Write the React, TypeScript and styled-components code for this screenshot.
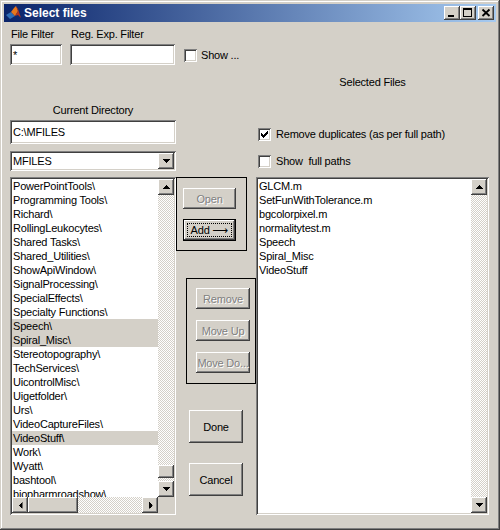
import React from "react";
import styled, { createGlobalStyle, css } from "styled-components";

const GlobalStyle = createGlobalStyle`
  html, body {
    margin: 0;
    padding: 0;
    background: #d4d0c8;
  }
  body {
    font-family: "Liberation Sans", Arial, sans-serif;
    font-size: 11px;
    letter-spacing: -0.2px;
    color: #000;
  }
`

const raised = css`
  box-shadow: inset -1px -1px #404040, inset 1px 1px #fff, inset -2px -2px #808080, inset 2px 2px #d4d0c8;
`

const sunken = css`
  box-shadow: inset 1px 1px #808080, inset -1px -1px #fff, inset 2px 2px #404040, inset -2px -2px #d4d0c8;
`

const checker = css`
  background-color: #fff;
  background-image: conic-gradient(#d4d0c8 0 25%, #fff 0 50%, #d4d0c8 0 75%, #fff 0);
  background-size: 2px 2px;
`

const Window = styled.div`
  box-sizing: border-box;
  width: 500px;
  height: 530px;
  padding: 4px;
  background: #d4d0c8;
  box-shadow: inset -1px -1px #404040, inset 1px 1px #d4d0c8, inset -2px -2px #808080, inset 2px 2px #fff;
  display: flex;
  flex-direction: column;
  overflow: hidden;
`

const TitleBar = styled.div`
  height: 18px;
  display: flex;
  align-items: center;
  padding: 0 2px;
  background: linear-gradient(to right, #0a246a, #a6caf0);
  color: #fff;
  font-size: 12px;
  font-weight: bold;
  letter-spacing: 0;
`

const TitleText = styled.span`
  flex: 1;
  margin-left: 2px;
`

const WinButton = styled.div<{ $gap?: number }>`
  width: 16px;
  height: 14px;
  margin-left: ${p => p.$gap ?? 0}px;
  background: #d4d0c8;
  ${raised}
  display: flex;
  align-items: center;
  justify-content: center;
`

const Body = styled.div`
  flex: 1;
  display: flex;
  flex-direction: column;
  padding: 6px 0 0 6px;
`

const Header = styled.div`
  display: flex;
  height: 149px;
`

const LeftHeader = styled.div`
  width: 246px;
  display: flex;
  flex-direction: column;
`

const FilterRow = styled.div`
  display: flex;
  align-items: flex-end;
`

const Field = styled.div<{ $gap?: number }>`
  display: flex;
  flex-direction: column;
  margin-left: ${p => p.$gap ?? 0}px;
`

const FieldLabel = styled.div`
  height: 13px;
  line-height: 13px;
  margin-bottom: 3px;
  padding-left: 1px;
  white-space: nowrap;
`

const TextBox = styled.div<{ $w: number; $h: number; $mt?: number }>`
  box-sizing: border-box;
  width: ${p => p.$w}px;
  height: ${p => p.$h}px;
  margin-top: ${p => p.$mt ?? 0}px;
  padding: 0 3px;
  background: #fff;
  ${sunken}
  display: flex;
  align-items: center;
  white-space: nowrap;
`

const CheckItem = styled.div<{ $gap?: number; $mt?: number; $mb?: number }>`
  display: flex;
  align-items: center;
  gap: 4px;
  margin-left: ${p => p.$gap ?? 0}px;
  margin-top: ${p => p.$mt ?? 0}px;
  margin-bottom: ${p => p.$mb ?? 0}px;
  line-height: 13px;
  white-space: nowrap;
`

const CheckSquare = styled.div`
  box-sizing: border-box;
  width: 13px;
  height: 13px;
  background: #fff;
  ${sunken}
  display: flex;
  align-items: center;
  justify-content: center;
  flex-shrink: 0;
`

const CenterLabel = styled.div<{ $w: number; $mt: number }>`
  width: ${p => p.$w}px;
  margin-top: ${p => p.$mt}px;
  height: 13px;
  line-height: 13px;
  text-align: center;
`

const Dropdown = styled.div`
  box-sizing: border-box;
  width: 166px;
  height: 20px;
  margin-top: 7px;
  padding: 2px;
  background: #fff;
  ${sunken}
  display: flex;
  align-items: stretch;
`

const DropText = styled.div`
  flex: 1;
  padding-left: 1px;
  line-height: 16px;
`

const RightHeader = styled.div`
  width: 233px;
  display: flex;
  flex-direction: column;
`

const CheckRow = styled(CheckItem)`
  padding-left: 2px;
  gap: 5px;
`

const Main = styled.div`
  display: flex;
  align-items: flex-start;
`

const ListFrame = styled.div<{ $w: number; $hscroll: boolean }>`
  box-sizing: border-box;
  width: ${p => p.$w}px;
  height: 338px;
  padding: 2px;
  background: #fff;
  ${sunken}
  display: grid;
  grid-template-columns: 1fr 16px;
  grid-template-rows: ${p => (p.$hscroll ? "1fr 16px" : "1fr")};
  flex-shrink: 0;
`

const Items = styled.div`
  overflow: hidden;
  min-width: 0;
  min-height: 0;
`

const Row = styled.div<{ $selected?: boolean }>`
  box-sizing: border-box;
  height: 14px;
  padding: 1px 0 0 1px;
  line-height: 13px;
  white-space: nowrap;
  background: ${p => (p.$selected ? "#d4d0c8" : "transparent")};
`

const VScroll = styled.div`
  display: flex;
  flex-direction: column;
`

const HScroll = styled.div`
  display: flex;
`

const Track = styled.div<{ $vertical?: boolean }>`
  flex: 1;
  ${checker}
  display: flex;
  flex-direction: ${p => (p.$vertical ? "column" : "row")};
  justify-content: flex-end;
`

const Thumb = styled.div<{ $w: number; $h: number; $mb?: number }>`
  width: ${p => p.$w}px;
  height: ${p => p.$h}px;
  margin-bottom: ${p => p.$mb ?? 0}px;
  background: #d4d0c8;
  ${raised}
  flex-shrink: 0;
`

const ArrowBox = styled.div`
  width: 16px;
  height: 16px;
  flex-shrink: 0;
  background: #d4d0c8;
  ${raised}
  display: flex;
  align-items: center;
  justify-content: center;
`

const Corner = styled.div`
  background: #d4d0c8;
`

const MiddleCol = styled.div`
  width: 80px;
  flex-shrink: 0;
  display: flex;
  flex-direction: column;
`

const Frame = styled.div<{ $w: number; $h: number; $ml?: number; $mt?: number; $pad: string; $gap: number }>`
  box-sizing: border-box;
  width: ${p => p.$w}px;
  height: ${p => p.$h}px;
  margin-left: ${p => p.$ml ?? 0}px;
  margin-top: ${p => p.$mt ?? 0}px;
  padding: ${p => p.$pad};
  border: 1px solid #000;
  display: flex;
  flex-direction: column;
  gap: ${p => p.$gap}px;
`

const Button = styled.div<{ $w: number; $h: number; $disabled?: boolean; $ml?: number; $mt?: number }>`
  box-sizing: border-box;
  width: ${p => p.$w}px;
  height: ${p => p.$h}px;
  margin-left: ${p => p.$ml ?? 0}px;
  margin-top: ${p => p.$mt ?? 0}px;
  background: #d4d0c8;
  ${raised}
  display: flex;
  align-items: center;
  justify-content: center;
  white-space: nowrap;
  overflow: hidden;
  color: ${p => (p.$disabled ? "#808080" : "#000")};
  text-shadow: ${p => (p.$disabled ? "1px 1px #fff" : "none")};
`

const DefaultButton = styled.div`
  box-sizing: border-box;
  width: 53px;
  height: 22px;
  border: 1px solid #000;
  background: #d4d0c8;
  ${raised}
  display: flex;
  align-items: center;
  justify-content: center;
  position: relative;
  &::after {
    content: "";
    position: absolute;
    inset: 3px;
    border: 1px dotted #000;
  }
`

const ArrowGlyph = styled.span`
  font-family: "DejaVu Sans", sans-serif;
  font-size: 11px;
  letter-spacing: 0;
  margin-left: 3px;
`

type Dir = "up" | "down" | "left" | "right"

const rotation: Record<Dir, number> = { up: 0, down: 180, left: -90, right: 90 }

const ScrollArrow = ({ dir }: { dir: Dir }) => (
  <ArrowBox>
    <svg width="7" height="4" viewBox="0 0 7 4" style={{ transform: `rotate(${rotation[dir]}deg)` }} shapeRendering="crispEdges">
      <path d="M3 0h1v1h1v1h1v1h1v1H0V3h1V2h1V1h1z" fill="#000" />
    </svg>
  </ArrowBox>
)

const Checkbox = ({ checked }: { checked?: boolean }) => (
  <CheckSquare>
    {checked && (
      <svg width="7" height="7" viewBox="0 0 7 7" shapeRendering="crispEdges">
        <path d="M6 0h1v3h-1v1h-1v1h-1v1h-1v1h-1v-1h-1v-1h-1v-3h1v1h1v1h1v-1h1v-1h1z" fill="#000" />
      </svg>
    )}
  </CheckSquare>
)

const MatlabIcon = () => (
  <svg width="16" height="16" viewBox="0 0 16 16">
    <polygon points="0,10 5,7 9,11 4,14" fill="#2f6db5" />
    <polygon points="5,7 8,3 10,1 12,6 9,11" fill="#e8771c" />
    <polygon points="10,1 12,4 15,13 16,14 12,10 9,11 12,6" fill="#b5321c" />
  </svg>
)

interface ListProps {
  width: number;
  items: string[];
  selected: string[];
  hscroll?: boolean;
}

const ListBox = ({ width, items, selected, hscroll = false }: ListProps) => (
  <ListFrame $w={width} $hscroll={hscroll}>
    <Items>
      {items.map(item => (
        <Row key={item} $selected={selected.includes(item)}>{item}</Row>
      ))}
    </Items>
    <VScroll>
      <ScrollArrow dir="up" />
      <Track $vertical>{hscroll && <Thumb $w={16} $h={13} $mb={3} />}</Track>
      <ScrollArrow dir="down" />
    </VScroll>
    {hscroll && (
      <>
        <HScroll>
          <ScrollArrow dir="left" />
          <Thumb $w={50} $h={16} />
          <Track />
          <ScrollArrow dir="right" />
        </HScroll>
        <Corner />
      </>
    )}
  </ListFrame>
)

const folders = [
  "PowerPointTools\\",
  "Programming Tools\\",
  "Richard\\",
  "RollingLeukocytes\\",
  "Shared Tasks\\",
  "Shared_Utilities\\",
  "ShowApiWindow\\",
  "SignalProcessing\\",
  "SpecialEffects\\",
  "Specialty Functions\\",
  "Speech\\",
  "Spiral_Misc\\",
  "Stereotopography\\",
  "TechServices\\",
  "UicontrolMisc\\",
  "Uigetfolder\\",
  "Urs\\",
  "VideoCaptureFiles\\",
  "VideoStuff\\",
  "Work\\",
  "Wyatt\\",
  "bashtool\\",
  "biopharmroadshow\\",
]

const picked = [
  "GLCM.m",
  "SetFunWithTolerance.m",
  "bgcolorpixel.m",
  "normalitytest.m",
  "Speech",
  "Spiral_Misc",
  "VideoStuff",
]

export default function App() {
  return (
    <>
      <GlobalStyle />
      <Window>
        <TitleBar>
          <MatlabIcon />
          <TitleText>Select files</TitleText>
          <WinButton>
            <svg width="16" height="14" viewBox="0 0 16 14" shapeRendering="crispEdges">
              <rect x="4" y="9" width="6" height="2" fill="#000" />
            </svg>
          </WinButton>
          <WinButton>
            <svg width="16" height="14" viewBox="0 0 16 14" shapeRendering="crispEdges">
              <path d="M3 2h9v9H3z M4 4v6h7V4z" fill="#000" fillRule="evenodd" />
            </svg>
          </WinButton>
          <WinButton $gap={2}>
            <svg width="16" height="14" viewBox="0 0 16 14">
              <path d="M4.5 3.5l7 6.5M11.5 3.5l-7 6.5" stroke="#000" strokeWidth="1.8" />
            </svg>
          </WinButton>
        </TitleBar>

        <Body>
          <Header>
            <LeftHeader>
              <FilterRow>
                <Field>
                  <FieldLabel>File Filter</FieldLabel>
                  <TextBox $w={52} $h={21}>*</TextBox>
                </Field>
                <Field $gap={8}>
                  <FieldLabel>Reg. Exp. Filter</FieldLabel>
                  <TextBox $w={105} $h={21} />
                </Field>
                <CheckItem $gap={9} $mb={3}>
                  <Checkbox />
                  Show ...
                </CheckItem>
              </FilterRow>
              <CenterLabel $w={166} $mt={39}>Current Directory</CenterLabel>
              <TextBox $w={166} $h={24} $mt={3}>C:\MFILES</TextBox>
              <Dropdown>
                <DropText>MFILES</DropText>
                <ScrollArrow dir="down" />
              </Dropdown>
            </LeftHeader>
            <RightHeader>
              <CenterLabel $w={233} $mt={48}>Selected Files</CenterLabel>
              <CheckRow $mt={39}>
                <Checkbox checked />
                Remove duplicates (as per full path)
              </CheckRow>
              <CheckRow $mt={14}>
                <Checkbox />
                Show{"\u00a0\u00a0"}full paths
              </CheckRow>
            </RightHeader>
          </Header>

          <Main>
            <ListBox width={166} items={folders} selected={["Speech\\", "Spiral_Misc\\", "VideoStuff\\"]} hscroll />
            <MiddleCol>
              <Frame $w={71} $h={74} $pad="10px 0 0 6px" $gap={10}>
                <Button $w={53} $h={21} $disabled>Open</Button>
                <DefaultButton>
                  Add<ArrowGlyph>⟶</ArrowGlyph>
                </DefaultButton>
              </Frame>
              <Frame $w={70} $h={106} $ml={10} $mt={27} $pad="9px 0 0 9px" $gap={11}>
                <Button $w={54} $h={21} $disabled>Remove</Button>
                <Button $w={54} $h={21} $disabled>Move Up</Button>
                <Button $w={54} $h={21} $disabled>Move Do...</Button>
              </Frame>
              <Button $w={54} $h={33} $ml={13} $mt={26}>Done</Button>
              <Button $w={54} $h={33} $ml={13} $mt={20}>Cancel</Button>
            </MiddleCol>
            <ListBox width={233} items={picked} selected={[]} />
          </Main>
        </Body>
      </Window>
    </>
  )
}
